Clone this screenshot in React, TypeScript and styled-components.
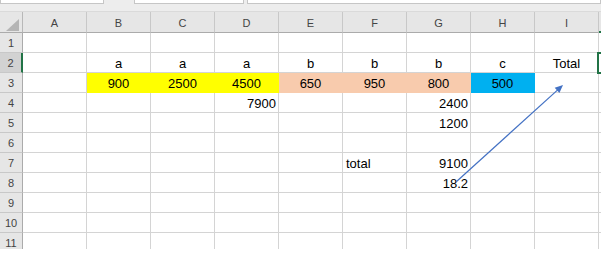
import React from "react";
import styled, { createGlobalStyle } from "styled-components";

const Global = createGlobalStyle`
  html, body { margin: 0; padding: 0; background: #ffffff; }
  body { font-family: "Liberation Sans", Arial, sans-serif; }
`;

const Page = styled.div`
  position: relative;
  width: 601px;
  height: 271px;
  overflow: hidden;
  background: #ffffff;
`;

const TopStrip = styled.div`
  display: flex;
  height: 12px;
  background: #ededed;
  border-bottom: 1px solid #dadada;
  box-sizing: border-box;
`;

const FieldBox = styled.div<{ $left: number; $width?: number }>`
  margin-left: ${(p) => p.$left}px;
  ${(p) => (p.$width ? `width: ${p.$width}px;` : "flex: 1;")}
  height: 4px;
  box-sizing: border-box;
  background: #ffffff;
  border: 1px solid #c6c6c6;
  border-top: none;
`;

const SheetClip = styled.div`
  height: 237px;
  overflow: hidden;
`;

const Sheet = styled.div`
  display: grid;
  grid-template-columns: 23px repeat(9, 64px) 4px;
  grid-template-rows: 21px repeat(11, 20px);
`;

const HeaderBase = styled.div`
  box-sizing: border-box;
  background: #e6e6e6;
  color: #444444;
  font-family: "Liberation Sans", Arial, sans-serif;
  font-size: 11px;
  line-height: 19px;
  text-align: center;
  overflow: hidden;
`;

const Corner = styled(HeaderBase)`
  position: relative;
  border-right: 1px solid #b8b8b8;
  border-bottom: 1px solid #ababab;
`;

const CornerTriangle = styled.div`
  position: absolute;
  left: 6px;
  top: 7px;
  width: 0;
  height: 0;
  border-left: 13px solid transparent;
  border-bottom: 12px solid #b5b5b5;
`;

const ColHeader = styled(HeaderBase)<{ $active?: boolean }>`
  padding-top: 2px;
  border-right: 1px solid #c8c8c8;
  border-bottom: ${(p) => (p.$active ? "2px solid #217346" : "1px solid #ababab")};
`;

const RowHeader = styled(HeaderBase)<{ $selected?: boolean }>`
  padding-top: 1px;
  background: ${(p) => (p.$selected ? "#d2d2d2" : "#e6e6e6")};
  border-bottom: 1px solid #c8c8c8;
  border-right: ${(p) => (p.$selected ? "2px solid #217346" : "1px solid #ababab")};
`;

const Cell = styled.div<{ $fill?: string; $align?: "left" | "center" | "right" }>`
  box-sizing: border-box;
  background: ${(p) => p.$fill || "#ffffff"};
  border-right: 1px solid ${(p) => p.$fill || "#d4d4d4"};
  border-bottom: 1px solid ${(p) => p.$fill || "#d4d4d4"};
  color: #000000;
  font-family: "Liberation Sans", Arial, sans-serif;
  font-size: 13px;
  line-height: 21px;
  text-align: ${(p) => p.$align || "center"};
  padding: 0 ${(p) => (p.$align === "right" ? "2px" : "0")} 0
    ${(p) => (p.$align === "left" ? "3px" : "0")};
  white-space: nowrap;
  overflow: visible;
`;

const Selection = styled.div`
  position: absolute;
  left: 597px;
  top: 52px;
  width: 20px;
  height: 22px;
  box-sizing: border-box;
  border: 2px solid #217346;
  pointer-events: none;
`;

const ArrowLayer = styled.svg`
  position: absolute;
  left: 0;
  top: 0;
  pointer-events: none;
`;

type Align = "left" | "center" | "right";
type CellData = { v: string; fill?: string; align?: Align };

const YELLOW = "#ffff00";
const PEACH = "#f8cbad";
const BLUE = "#00b0f0";

const cols = ["A", "B", "C", "D", "E", "F", "G", "H", "I"];

const data: Record<string, CellData> = {
  B2: { v: "a" },
  C2: { v: "a" },
  D2: { v: "a" },
  E2: { v: "b" },
  F2: { v: "b" },
  G2: { v: "b" },
  H2: { v: "c" },
  I2: { v: "Total" },
  B3: { v: "900", fill: YELLOW },
  C3: { v: "2500", fill: YELLOW },
  D3: { v: "4500", fill: YELLOW },
  E3: { v: "650", fill: PEACH },
  F3: { v: "950", fill: PEACH },
  G3: { v: "800", fill: PEACH },
  H3: { v: "500", fill: BLUE },
  D4: { v: "7900", align: "right" },
  G4: { v: "2400", align: "right" },
  G5: { v: "1200", align: "right" },
  F7: { v: "total", align: "left" },
  G7: { v: "9100", align: "right" },
  G8: { v: "18.2", align: "right" },
};

const rows = Array.from({ length: 11 }, (_, i) => i + 1);

export default function App() {
  return (
    <Page>
      <Global />
      <TopStrip>
        <FieldBox $left={0} $width={104} />
        <FieldBox $left={30} $width={110} />
        <FieldBox $left={3} />
      </TopStrip>
      <SheetClip>
        <Sheet>
          <Corner>
            <CornerTriangle />
          </Corner>
          {cols.map((c) => (
            <ColHeader key={c}>{c}</ColHeader>
          ))}
          <ColHeader $active />
          {rows.map((r) => (
            <React.Fragment key={r}>
              <RowHeader $selected={r === 2}>{r}</RowHeader>
              {cols.map((c) => {
                const d = data[`${c}${r}`];
                return (
                  <Cell key={c} $fill={d?.fill} $align={d?.align}>
                    {d?.v}
                  </Cell>
                );
              })}
              <Cell />
            </React.Fragment>
          ))}
        </Sheet>
      </SheetClip>
      <Selection />
      <ArrowLayer width={601} height={271} viewBox="0 0 601 271">
        <line x1={456} y1={182} x2={558} y2={89.6} stroke="#4472c4" strokeWidth={1.2} />
        <polygon points="563,85 559.4,93 554.7,87.8" fill="#4472c4" />
      </ArrowLayer>
    </Page>
  );
}
